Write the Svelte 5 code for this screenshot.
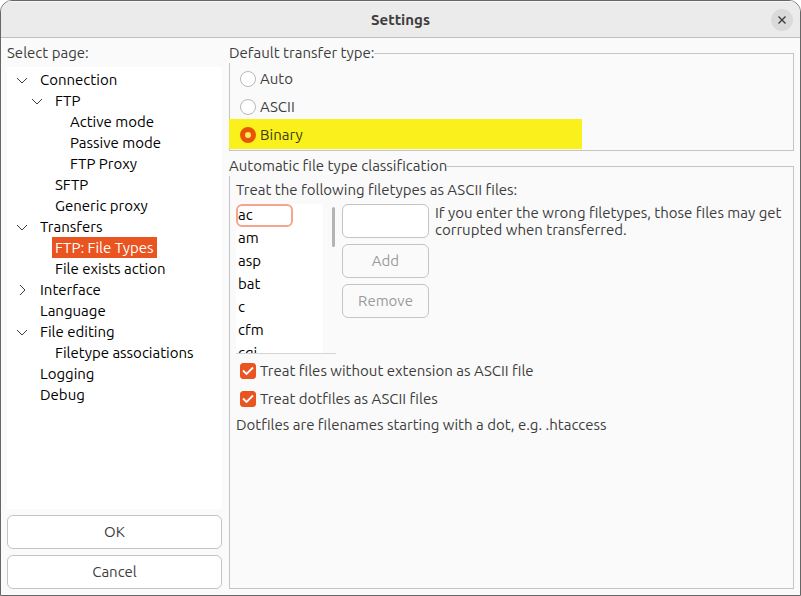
<script>
  const pages = [
    { name: 'Connection', level: 0, state: 'open' },
    { name: 'FTP', level: 1, state: 'open' },
    { name: 'Active mode', level: 2 },
    { name: 'Passive mode', level: 2 },
    { name: 'FTP Proxy', level: 2 },
    { name: 'SFTP', level: 1 },
    { name: 'Generic proxy', level: 1 },
    { name: 'Transfers', level: 0, state: 'open' },
    { name: 'FTP: File Types', level: 1 },
    { name: 'File exists action', level: 1 },
    { name: 'Interface', level: 0, state: 'closed' },
    { name: 'Language', level: 0 },
    { name: 'File editing', level: 0, state: 'open' },
    { name: 'Filetype associations', level: 1 },
    { name: 'Logging', level: 0 },
    { name: 'Debug', level: 0 }
  ];
  const types = ['ac', 'am', 'asp', 'bat', 'c', 'cfm', 'cgi'];
  const modes = ['Auto', 'ASCII', 'Binary'];

  let page = $state('FTP: File Types');
  let mode = $state('Binary');
  let focused = $state('ac');
  let extensionless = $state(true);
  let dotfiles = $state(true);
  let entry = $state('');
</script>

{#snippet check(label, get, set)}
  <label class="option">
    <span class="tick">
      <input type="checkbox" checked={get()} onchange={(e) => set(e.currentTarget.checked)} />
      <svg viewBox="0 0 16 16" aria-hidden="true"><path d="M3 7.5 6.5 11 13 4.5" /></svg>
    </span>
    {label}
  </label>
{/snippet}

<div class="window">
  <header>
    <h1>Settings</h1>
    <button class="close" aria-label="Close">
      <svg viewBox="0 0 22 22" aria-hidden="true"><path d="M7.5 7.5l7 7M14.5 7.5l-7 7" /></svg>
    </button>
  </header>

  <main>
    <aside>
      <h2 id="pages">Select page:</h2>
      <ul class="tree" aria-labelledby="pages">
        {#each pages as p}
          <li class="level{p.level}">
            <span class="arrow">
              {#if p.state}
                <svg class={p.state} viewBox="0 0 14 14" aria-hidden="true"><path d="M2 5l5 5 5-5" /></svg>
              {/if}
            </span>
            <button class="page" class:selected={page === p.name} onclick={() => (page = p.name)}>{p.name}</button>
          </li>
        {/each}
      </ul>
      <button class="push">OK</button>
      <button class="push">Cancel</button>
    </aside>

    <section>
      <fieldset class="transfer">
        <legend>Default transfer type:</legend>
        {#each modes as m}
          <label class="option" class:marked={m === 'Binary'}>
            <input type="radio" name="mode" value={m} bind:group={mode} />
            {m}
          </label>
        {/each}
      </fieldset>

      <fieldset class="classify">
        <legend>Automatic file type classification</legend>
        <p id="types">Treat the following filetypes as ASCII files:</p>
        <div class="editor">
          <div class="list">
            <ul role="listbox" aria-labelledby="types">
              {#each types as t}
                <li role="option" aria-selected={focused === t}>
                  <button class:focused={focused === t} onclick={() => (focused = t)}>{t}</button>
                </li>
              {/each}
            </ul>
            <div class="thumb"></div>
          </div>
          <div class="actions">
            <input class="entry" type="text" aria-label="File type" bind:value={entry} />
            <button class="push" disabled>Add</button>
            <button class="push" disabled>Remove</button>
          </div>
          <p class="note">If you enter the wrong filetypes, those files may get corrupted when transferred.</p>
        </div>
        {@render check('Treat files without extension as ASCII file', () => extensionless, (v) => (extensionless = v))}
        {@render check('Treat dotfiles as ASCII files', () => dotfiles, (v) => (dotfiles = v))}
        <p class="hint">Dotfiles are filenames starting with a dot, e.g. .htaccess</p>
      </fieldset>
    </section>
  </main>
</div>

<style>
  :global(body) {
    margin: 0;
    background: #fff;
  }
  * {
    box-sizing: border-box;
  }
  .window {
    display: flex;
    flex-direction: column;
    min-height: 100vh;
    border: 1px solid #666;
    border-radius: 12px 12px 0 0;
    background: #fafafa;
    color: #3d3d3d;
    font: 15px/20px Ubuntu, "Noto Sans", sans-serif;
    overflow: hidden;
  }
  h1, h2, p, ul {
    margin: 0;
    padding: 0;
    font-size: 15px;
  }
  ul {
    list-style: none;
  }
  button, input {
    margin: 0;
    font: inherit;
    color: inherit;
  }
  svg {
    display: block;
    fill: none;
    stroke: #3d3d3d;
  }
  header {
    display: grid;
    grid-template-columns: 1fr auto 1fr;
    align-items: center;
    height: 37px;
    padding: 0 7px;
    background: #ebebeb;
    border-bottom: 1px solid #bfbfbf;
    border-top: 1px solid #f8f8f8;
  }
  h1 {
    grid-column: 2;
    font-weight: 700;
  }
  .close {
    justify-self: end;
    width: 22px;
    height: 22px;
    padding: 0;
    border: 0;
    border-radius: 50%;
    background: #dadada;
  }
  .close svg {
    stroke-width: 1.4;
  }
  main {
    flex: 1;
    display: flex;
    gap: 7px;
    padding: 5px 6px 6px;
  }
  aside {
    flex: 0 0 215px;
    display: flex;
    flex-direction: column;
    gap: 6px;
  }
  h2 {
    font-weight: 400;
    margin-bottom: -2px;
  }
  .tree {
    flex: 1;
    padding: 2px 0;
    background: #fff;
    color: #000;
  }
  .tree li {
    display: flex;
    align-items: center;
    gap: 8px;
    height: 21px;
    padding-left: 8px;
  }
  .tree .level1 {
    padding-left: 23px;
  }
  .tree .level2 {
    padding-left: 38px;
  }
  .arrow {
    width: 14px;
    height: 14px;
  }
  .closed {
    transform: rotate(-90deg);
  }
  .page {
    height: 21px;
    padding: 0 3px;
    border: 0;
    background: none;
    line-height: 21px;
    white-space: nowrap;
  }
  .page.selected {
    background: #e95420;
    color: #fff;
  }
  .push, .entry {
    height: 34px;
    width: 100%;
    padding: 0 8px;
    border: 1px solid #c4c4c4;
    border-radius: 6px;
    background: #fff;
  }
  .push:disabled {
    background: #fafafa;
    color: #9a9a9a;
  }
  section {
    flex: 1;
    min-width: 0;
    display: flex;
    flex-direction: column;
    gap: 5px;
  }
  fieldset {
    min-width: 0;
    margin: 0;
    padding: 0;
    border: 1px solid #c4c4c4;
  }
  legend {
    margin-left: -1px;
    padding: 0;
    background: #fafafa;
  }
  .transfer {
    padding: 2px 0 1px;
  }
  .option {
    display: flex;
    align-items: center;
    gap: 4px;
    height: 28px;
    padding-left: 10px;
  }
  .marked {
    height: 30px;
    width: calc(100% - 210px);
    margin: -2px 0 0 -1px;
    padding: 2px 0 0 11px;
    background: #faf01c;
    color: #3d3d12;
  }
  input[type="radio"], input[type="checkbox"] {
    appearance: none;
    flex: none;
    display: block;
    width: 16px;
    height: 16px;
    border: 1px solid #b8b8b8;
    border-radius: 50%;
    background: #fff;
  }
  input[type="radio"]:checked {
    border: 5px solid #e95400;
    background: #fbe96a;
  }
  input[type="checkbox"] {
    border-radius: 3px;
  }
  input[type="checkbox"]:checked {
    border-color: #e95420;
    background: #e95420;
  }
  .tick {
    display: grid;
  }
  .tick > * {
    grid-area: 1 / 1;
    width: 16px;
    height: 16px;
  }
  .tick svg {
    stroke: #fff;
    stroke-width: 1.8;
    pointer-events: none;
  }
  .classify {
    flex: 1;
    padding: 4px 6px;
  }
  .classify legend {
    margin-left: -7px;
  }
  .classify .option {
    padding-left: 4px;
  }
  .editor {
    display: flex;
    gap: 6px;
    margin: 4px 0 3px;
  }
  .list {
    flex: 0 0 100px;
    display: flex;
    height: 150px;
    border-bottom: 1px solid #d4d4d4;
    overflow: hidden;
  }
  .list ul {
    width: 87px;
    height: 161px;
    background: #fff;
    color: #000;
  }
  .list button {
    display: block;
    width: 57px;
    height: 23px;
    padding: 0 0 2px;
    border: 2px solid transparent;
    border-radius: 6px;
    background: none;
    line-height: 17px;
    text-align: left;
  }
  .list .focused {
    border-color: #f4a58c;
  }
  .thumb {
    width: 3px;
    height: 40px;
    margin: 3px 1px 0 auto;
    border-radius: 2px;
    background: #b4b4b4;
  }
  .actions {
    flex: 0 0 87px;
    display: flex;
    flex-direction: column;
    gap: 6px;
  }
  .note {
    flex: 1;
    line-height: 17px;
  }
  .hint {
    margin-top: 2px;
  }
</style>
